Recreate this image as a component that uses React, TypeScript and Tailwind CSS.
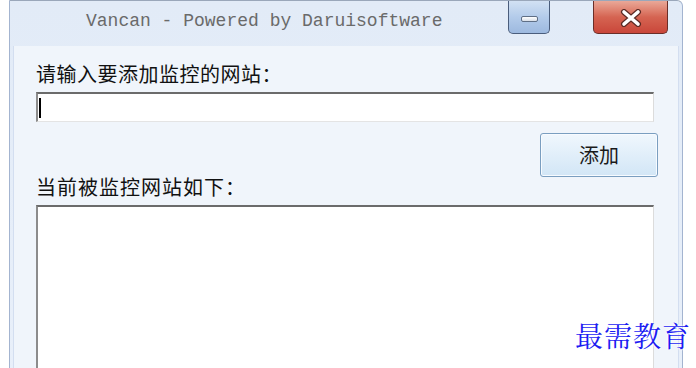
import React from "react";

const cjk = { fontFamily: '"Noto Sans CJK SC", "Noto Sans", sans-serif' };

function MinButton() {
  return (
    <div className="w-[42px] h-[33px] rounded-b-[5px] border border-t-0 border-[#4a5d7c] bg-gradient-to-b from-[#d2e1f3] via-[#b3cbea] to-[#9db9df] flex items-center justify-center">
      <div className="mt-[4px] w-[17px] h-[6px] rounded-[2px] border border-[#5f6f86] bg-gradient-to-b from-white to-[#d9dfe8]" />
    </div>
  );
}

function CloseButton() {
  return (
    <div className="w-[75px] h-[33px] rounded-b-[5px] border border-t-0 border-[#6a2e28] bg-gradient-to-b from-[#e9a898] via-[#d56452] to-[#c9463a] flex items-center justify-center">
      <svg width="22" height="18" viewBox="0 0 22 18" className="mt-[2px]">
        <path d="M4 3 L18 15 M18 3 L4 15" stroke="#5a2a24" strokeWidth="6" strokeLinecap="round" />
        <path d="M4 3 L18 15 M18 3 L4 15" stroke="#ffffff" strokeWidth="3.6" strokeLinecap="round" />
      </svg>
    </div>
  );
}

export default function App() {
  return (
    <div className="relative w-[696px] h-[368px] bg-white overflow-hidden">
      {/* window */}
      <div className="ml-[9px] w-[674px] h-[420px] border border-t-[#9aa7ba] border-x-[#a3b4d0] rounded-tr-[6px] bg-gradient-to-b from-[#e2ebf7] to-[#e9f0fa] flex flex-col">
        {/* title bar */}
        <div className="h-[45px] shrink-0 flex items-start pl-[76px] pr-[14px]">
          <div
            className="mt-[9px] text-[18px] leading-[22px] text-[#6a6a6a] whitespace-pre"
            style={{ fontFamily: '"Liberation Mono", monospace' }}
          >
            Vancan - Powered by Daruisoftware
          </div>
          <div className="flex-1" />
          <MinButton />
          <div className="w-[43px]" />
          <CloseButton />
        </div>

        {/* client area */}
        <div className="ml-[3px] mr-[3px] flex-1 bg-[#f0f5fb] border-l border-r border-[#d3def0] pt-[18px] pl-[22px]" style={cjk}>
          <div className="text-[20px] leading-[20px] tracking-[0.5px] text-[#111]">请输入要添加监控的网站：</div>
          <div className="mt-[8px] w-[618px] h-[30px] bg-white border-t-2 border-t-[#6b6b6b] border-l-2 border-l-[#8c8c8c] border-r border-r-[#dcdcdc] border-b border-b-[#e4e4e4] flex items-center pl-[1px]">
            <div className="w-[2px] h-[20px] bg-black" />
          </div>
          <div className="mt-[11px] w-[622px] flex justify-end">
            <button className="w-[118px] h-[44px] rounded-[3px] border border-[#7a9ec0] bg-gradient-to-b from-[#f0f7fd] to-[#d2e6f6] text-[20px] text-[#1a1a1a] flex items-center justify-center shadow-[inset_0_0_0_1px_#f7fbff]">
              添加
            </button>
          </div>
          <div className="text-[20px] leading-[20px] tracking-[1px] text-[#111]">当前被监控网站如下：</div>
          <div className="mt-[8px] w-[618px] h-[200px] bg-white border-t-2 border-t-[#6b6b6b] border-l-2 border-l-[#8c8c8c] border-r border-r-[#dcdcdc]" />
        </div>
      </div>

      {/* watermark */}
      <div
        className="absolute left-[575px] top-[318px] text-[28px] leading-[34px] text-[#1c1cf2] tracking-[1px] [text-shadow:0_0_2px_#fff,0_0_2px_#fff,0_0_3px_#fff]"
        style={{ fontFamily: '"Noto Serif CJK SC", "Noto Sans CJK SC", serif' }}
      >
        最需教育
      </div>
    </div>
  );
}
